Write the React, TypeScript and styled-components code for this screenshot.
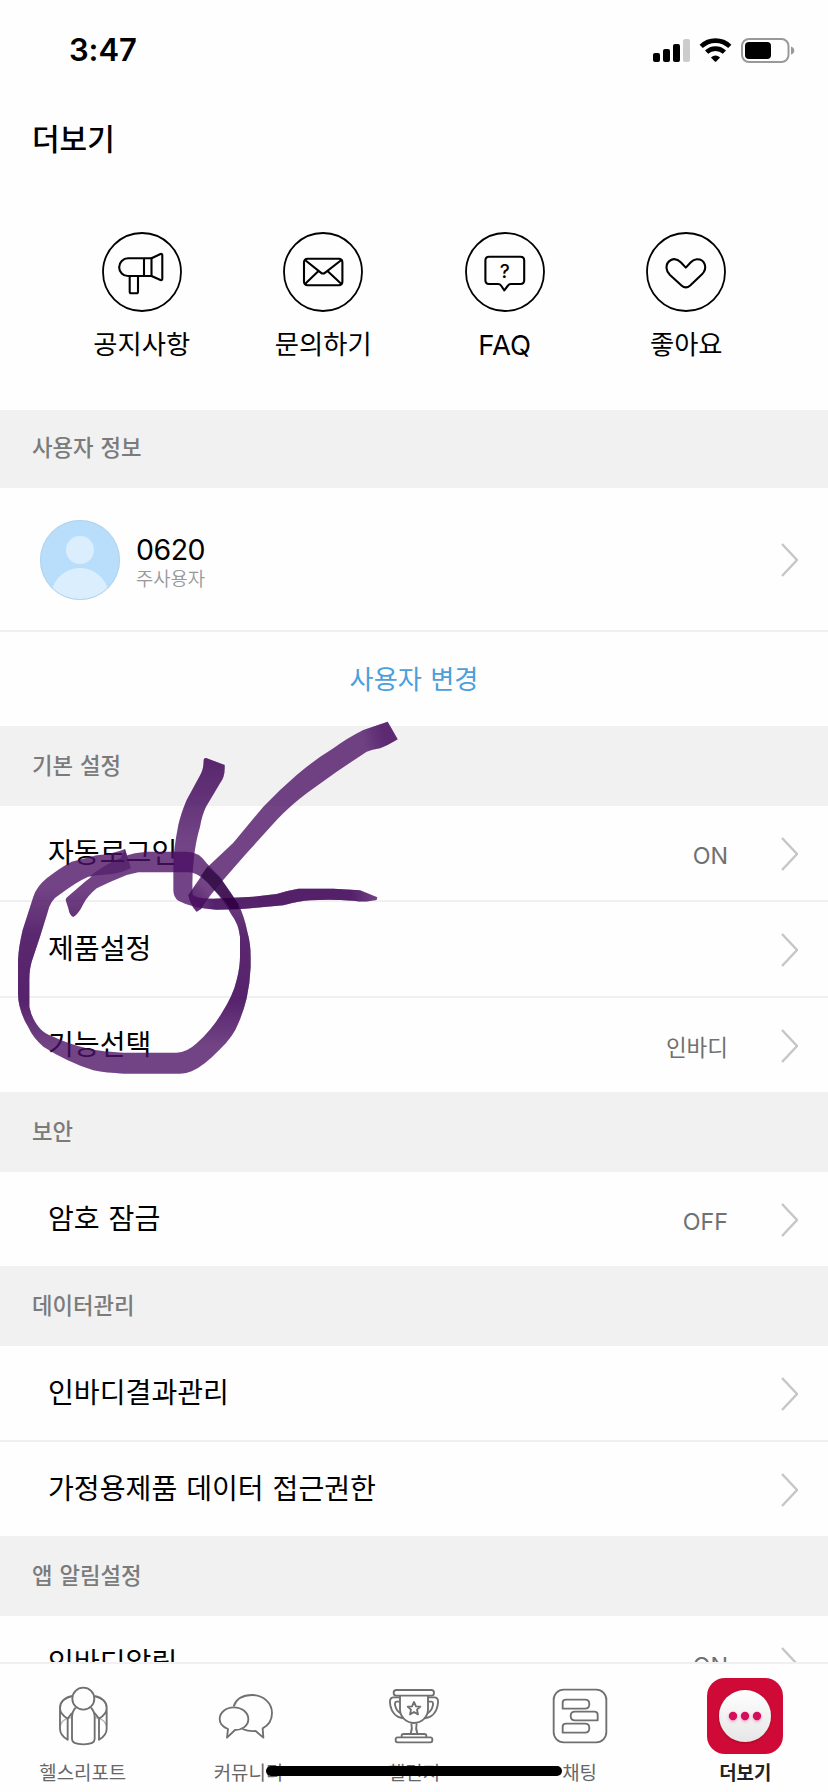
import React from "react";
import styled, { createGlobalStyle } from "styled-components";

const GlobalStyle = createGlobalStyle`
  * { box-sizing: border-box; }
  body {
    margin: 0;
    background: #fefefe;
    color: #000;
    font-family: Inter, "Noto Sans CJK KR", sans-serif;
    -webkit-font-smoothing: antialiased;
  }
`;

const Screen = styled.div`
  position: relative;
  display: flex;
  flex-direction: column;
  width: 828px;
  height: 1792px;
  overflow: hidden;
  background: #fefefe;
`;

const StatusBar = styled.header`
  display: flex;
  flex: none;
  justify-content: space-between;
  align-items: center;
  height: 99px;
  padding: 0 33px 0 69px;
`;

const Clock = styled.time`
  font-size: 31px;
  font-weight: 600;
  letter-spacing: -0.1px;
  line-height: 40px;
`;

const StatusIcons = styled.svg`
  width: 143px;
  height: 28px;
`;

const TitleBar = styled.div`
  display: flex;
  flex: none;
  align-items: center;
  height: 81px;
  padding: 0 32px 2px;
`;

const Title = styled.h1`
  margin: 0;
  font-size: 30px;
  font-weight: 500;
  line-height: 40px;
`;

const Content = styled.main`
  flex: 1;
  min-height: 0;
  overflow: hidden;
`;

const Shortcuts = styled.nav`
  display: grid;
  grid-template-columns: repeat(4, 1fr);
  height: 230px;
  padding: 52px 51px 0;
`;

const Shortcut = styled.div`
  display: flex;
  flex-direction: column;
  align-items: center;
  gap: 14px;
`;

const ShortcutIcon = styled.svg`
  width: 80px;
  height: 80px;
  fill: none;
  stroke: #000;
  stroke-width: 2.1;
  stroke-linejoin: round;
  stroke-linecap: round;
`;

const ShortcutLabel = styled.span<{ $latin?: boolean }>`
  font-size: ${(p) => (p.$latin ? 27.5 : 26.3)}px;
  line-height: 38px;
`;

const SectionHeader = styled.h2<{ $height?: number; $lift?: number }>`
  display: flex;
  align-items: center;
  height: ${(p) => p.$height ?? 80}px;
  margin: 0;
  padding: 0 32px ${(p) => p.$lift ?? 5}px;
  background: #f1f1f1;
  color: #7b7b7b;
  font-size: 22.3px;
  font-weight: 500;
  word-spacing: 1px;
`;

const Row = styled.div`
  display: flex;
  align-items: center;
  height: 94px;
  padding: 2px 30px 0 48px;
  & + & {
    height: 96px;
    border-top: 2px solid #f0f0f0;
  }
`;

const RowLabel = styled.span`
  flex: 1;
  padding-bottom: 7px;
  font-size: 28.1px;
  word-spacing: 1px;
`;

const RowValue = styled.span<{ $latin?: boolean }>`
  margin-right: 53px;
  padding-top: ${(p) => (p.$latin ? 2 : 0)}px;
  padding-bottom: ${(p) => (p.$latin ? 0 : 1)}px;
  color: #707070;
  font-size: ${(p) => (p.$latin ? 23.3 : 22.5)}px;
`;

const ChevronIcon = styled.svg`
  flex: none;
  width: 17px;
  height: 34px;
  fill: none;
  stroke: #c6c6c6;
  stroke-width: 2.4;
`;

const UserRow = styled.div`
  display: flex;
  align-items: center;
  height: 142px;
  padding: 2px 30px 0 40px;
`;

const Avatar = styled.svg`
  width: 80px;
  height: 80px;
`;

const UserText = styled.div`
  display: flex;
  flex: 1;
  flex-direction: column;
  padding: 6px 0 0 16px;
`;

const UserName = styled.span`
  font-size: 28.5px;
  line-height: 34px;
  letter-spacing: -0.5px;
`;

const UserRole = styled.span`
  color: #999;
  font-size: 18.8px;
  font-weight: 350;
  line-height: 26px;
`;

const ChangeUser = styled.div`
  display: flex;
  align-items: center;
  justify-content: center;
  height: 96px;
  padding-bottom: 3px;
  border-top: 2px solid #f0f0f0;
  color: #4c9fdb;
  font-size: 26.2px;
  word-spacing: 1px;
`;

const TabBar = styled.footer`
  display: grid;
  flex: none;
  grid-template-columns: repeat(5, 1fr);
  height: 130px;
  padding-top: 14px;
  border-top: 2px solid #f0f0f0;
  background: #fefefe;
`;

const Tab = styled.div`
  display: flex;
  flex-direction: column;
  align-items: center;
  gap: 7px;
`;

const TabIcon = styled.svg`
  width: 76px;
  height: 76px;
  fill: none;
  stroke: #707070;
  stroke-width: 5.6;
  stroke-linejoin: round;
`;

const TabLabel = styled.span<{ $active?: boolean }>`
  color: ${(p) => (p.$active ? "#222" : "#666")};
  font-size: 18.9px;
  font-weight: ${(p) => (p.$active ? 700 : 400)};
  line-height: 26px;
`;

const HomeIndicator = styled.div`
  position: absolute;
  left: 266px;
  bottom: 16px;
  width: 296px;
  height: 10px;
  border-radius: 5px;
  background: #000;
`;

const Markup = styled.svg`
  position: absolute;
  left: 0;
  top: 700px;
  width: 420px;
  height: 390px;
  pointer-events: none;
`;

const Chevron = () => (
  <ChevronIcon viewBox="0 0 17 34">
    <path d="M1 1 L16 17 L1 33" />
  </ChevronIcon>
);

const isLatin = (text: string) => /^[A-Z]+$/.test(text);

const SettingRow = ({ label, value }: { label: string; value?: string }) => (
  <Row>
    <RowLabel>{label}</RowLabel>
    {value && <RowValue $latin={isLatin(value)}>{value}</RowValue>}
    <Chevron />
  </Row>
);

const shortcuts = [
  {
    label: "공지사항",
    icon: (
      <>
        <path d="M49.5 26.3 H26 A8.8 8.8 0 0 0 26 44 H49.5 Z M42 26.3 V44" />
        <path d="M49.5 26.3 L58.5 22 Q60.3 21.4 60.3 23.2 V46.8 Q60.3 48.6 58.5 48 L49.5 44" />
        <path d="M27.7 44 V59.8 Q27.7 61.3 29.2 61.3 H34.5 Q36 61.3 36 59.8 V44" />
      </>
    ),
  },
  {
    label: "문의하기",
    icon: (
      <>
        <rect x="21" y="26.8" width="38.4" height="26.4" rx="3.4" />
        <path d="M22 28 L37.8 40.6 Q40 42.4 42.2 40.6 L58.4 28 M22 52 L35.5 39 M58.4 52 L44.5 39" />
      </>
    ),
  },
  {
    label: "FAQ",
    icon: (
      <>
        <path d="M24 24.8 H55.5 Q59.2 24.8 59.2 28.5 V48.3 Q59.2 52 55.5 52 H46 Q44 52 43 53.5 L39.3 58.4 L36 53.5 Q35 52 33 52 H24 Q20.4 52 20.4 48.3 V28.5 Q20.4 24.8 24 24.8 Z" />
        <text x="39.8" y="46" fontSize="19" fontWeight="500" textAnchor="middle" fill="#000" stroke="none">?</text>
      </>
    ),
  },
  {
    label: "좋아요",
    icon: (
      <path d="M39.8 35.6 L35 30.5 C28 23.5 20.3 29 20.5 36 C20.6 39 22 41 24 43 L35.5 53.5 Q39.8 57.4 44.2 53.5 L56 42.3 C62 36 59 27 50.8 27.2 C48 27.4 46.2 28.8 44.8 30.3 Z" />
    ),
  },
];

const ReportIcon = () => (
  <TabIcon viewBox="134 114 228 228">
    <g stroke="#b4b4b4" strokeWidth="4">
      <path d="M181 256 C183 244 192 238 203 235 L214 233" />
      <path d="M317 256 C315 244 306 238 295 235 L284 233" />
    </g>
    <circle cx="249" cy="176" r="33" />
    <path d="M226 203 C218 212 215 220 215 230 V297 C215 308 230 313 249 313 C268 313 283 308 283 297 V230 C283 220 280 212 272 203" />
    <path d="M216 168 C193 173 179 186 179 204 V266 C179 280 188 291 202 299 V236 C190 229 179 218 179 204 M202 236 L215 219" />
    <path d="M282 168 C305 173 319 186 319 204 V266 C319 280 310 291 296 299 V236 C308 229 319 218 319 204 M296 236 L283 219" />
  </TabIcon>
);

const CommunityIcon = () => (
  <TabIcon viewBox="631 114 228 228" strokeLinejoin="miter">
    <path d="M702 199 C710 176 732 165 757 165 C792 165 817 190 817 219 C817 239 806 256 789 265 L791 293 L768 273 Q748 275 728 267" />
    <path d="M702 202 C727 202 746 218 746 237 C746 258 727 270 706 270 L682 293 L685 267 C669 261 660 250 660 237 C660 218 679 202 702 202 Z" />
  </TabIcon>
);

const ChallengeIcon = () => (
  <TabIcon viewBox="1128 114 228 228">
    <rect x="1181" y="150" width="121" height="17" rx="8" />
    <path d="M1200 167 V208 C1200 232 1220 249 1242 249 C1264 249 1284 232 1284 208 V167" />
    <path d="M1200 172 H1180 C1170 172 1168 184 1171 196 C1175 218 1190 233 1211 235 M1200 185 H1190 C1184 185 1184 192 1186 199 C1189 210 1194 216 1202 220" />
    <path d="M1284 172 H1304 C1314 172 1316 184 1313 196 C1309 218 1294 233 1273 235 M1284 185 H1294 C1300 185 1300 192 1298 199 C1295 210 1290 216 1282 220" />
    <path d="M1242 186 L1248 199 L1261 200 L1251 209 L1254 223 L1242 216 L1230 223 L1233 209 L1223 200 L1236 199 Z" />
    <path d="M1234 250 Q1238 266 1232 281 M1250 250 Q1246 266 1252 281" />
    <path d="M1205 292 V287 Q1205 282 1211 282 H1273 Q1279 282 1279 287 V292" />
    <rect x="1187" y="292" width="110" height="15" rx="6" />
  </TabIcon>
);

const ChatIcon = () => (
  <TabIcon viewBox="425 114 228 228">
    <rect x="460" y="149" width="158" height="158" rx="30" />
    <path d="M487 206 V188 Q487 179 497 179 H554 Q567 179 567 192 Q567 206 554 206 Z" />
    <path d="M592 241 V224 Q592 215 582 215 H524 Q511 215 511 228 Q511 241 524 241 Z" />
    <path d="M487 278 V260 Q487 251 497 251 H554 Q567 251 567 264 Q567 278 554 278 Z" />
  </TabIcon>
);

const MoreIcon = () => (
  <TabIcon viewBox="0 0 228 228">
    <defs>
      <linearGradient id="disc" x1="0" y1="0" x2="0" y2="1">
        <stop offset="0" stopColor="#ffffff" />
        <stop offset="1" stopColor="#e6e6e6" />
      </linearGradient>
      <filter id="discShadow" x="-20%" y="-20%" width="140%" height="140%">
        <feDropShadow dx="0" dy="2" stdDeviation="2.5" floodColor="#700018" floodOpacity="0.6" />
      </filter>
      <filter id="dotShadow" x="-50%" y="-50%" width="200%" height="250%">
        <feDropShadow dx="0" dy="4" stdDeviation="4" floodColor="#e0105f" floodOpacity="0.35" />
      </filter>
    </defs>
    <rect width="228" height="228" rx="54" fill="#cf0a36" stroke="none" />
    <circle cx="114" cy="114" r="78" fill="url(#disc)" stroke="none" filter="url(#discShadow)" />
    <g fill="#d60b5c" stroke="none" filter="url(#dotShadow)">
      <circle cx="78" cy="114" r="12.5" />
      <circle cx="114" cy="114" r="12.5" />
      <circle cx="150" cy="114" r="12.5" />
    </g>
  </TabIcon>
);

const tabs = [
  { label: "헬스리포트", Icon: ReportIcon },
  { label: "커뮤니티", Icon: CommunityIcon },
  { label: "챌린지", Icon: ChallengeIcon },
  { label: "채팅", Icon: ChatIcon },
  { label: "더보기", Icon: MoreIcon, active: true },
];

const shaft =
  "M1163 65 L1090 90 Q1040 115 1000 145 Q940 182 890 225 Q840 268 790 320 L700 428 L622 502 L565 585 Q570 615 590 635 L604 626 Q625 590 665 545 L735 465 L830 360 Q870 318 920 280 L1010 215 L1100 155 Q1115 149 1140 145 Q1160 138 1193 118 Z";
const head =
  "M618 174 Q611 174 611 182 Q611 205 602 223 L560 300 Q543 340 535 375 Q520 450 520 500 V570 Q520 592 535 602 Q575 624 650 629 Q710 629 760 624 L850 616 Q900 603 930 601 Q990 597 1060 602 Q1090 606 1105 604 L1130 600 L1132 592 L1080 571 Q1040 568 1000 566 H895 Q860 572 830 582 L760 590 L640 596 Q590 596 578 585 Q575 530 582 470 Q588 420 600 380 Q606 345 618 320 L660 250 Q674 232 674 205 V195 Z";
const loop =
  "M197 600 Q197 594 203 590 L255 545 L330 487 Q370 468 405 460 L440 455 H560 Q598 455 620 490 L660 532 Q690 575 715 612 Q733 650 742 695 Q752 730 752 770 V800 Q750 850 740 895 Q732 930 715 970 Q700 1010 660 1048 Q610 1100 575 1114 Q560 1121 540 1121 H370 Q320 1119 280 1111 Q200 1085 130 1040 Q100 1015 85 982 Q54 930 54 880 V780 Q56 740 68 690 L100 590 Q110 560 140 535 Q180 503 215 485 L290 466 Q340 462 375 447 L393 505 Q360 520 330 523 L265 530 Q230 545 180 583 Q150 600 142 640 L120 710 L100 770 Q88 800 88 840 V920 Q96 960 122 988 Q135 1002 155 1008 Q200 1030 260 1045 Q310 1056 370 1058 H530 Q560 1058 590 1030 Q635 990 665 940 Q700 885 710 840 Q720 800 720 770 V710 Q715 670 695 645 Q670 600 640 568 Q600 520 570 517 H415 L380 525 Q330 545 290 565 Q262 588 250 612 Q235 643 220 651 Q209 648 205 625 Z";

const PenMarkup = () => (
  <Markup viewBox="0 0 1260 1170">
    <defs>
      <filter id="soften" x="-5%" y="-5%" width="110%" height="110%">
        <feGaussianBlur stdDeviation="2" />
      </filter>
      <linearGradient id="shaftEnd" gradientUnits="userSpaceOnUse" x1="1085" y1="120" x2="1150" y2="100">
        <stop offset="0" stopColor="#420a5a" stopOpacity="0" />
        <stop offset="1" stopColor="#420a5a" stopOpacity="0.45" />
      </linearGradient>
      <linearGradient id="shaftTip" gradientUnits="userSpaceOnUse" x1="625" y1="570" x2="590" y2="600">
        <stop offset="0" stopColor="#420a5a" stopOpacity="0" />
        <stop offset="1" stopColor="#420a5a" stopOpacity="0.4" />
      </linearGradient>
      <linearGradient id="headTop" gradientUnits="userSpaceOnUse" x1="0" y1="180" x2="0" y2="430">
        <stop offset="0" stopColor="#420a5a" stopOpacity="0.5" />
        <stop offset="0.4" stopColor="#420a5a" stopOpacity="0.32" />
        <stop offset="1" stopColor="#420a5a" stopOpacity="0" />
      </linearGradient>
      <linearGradient id="headTail" gradientUnits="userSpaceOnUse" x1="575" y1="0" x2="1135" y2="0">
        <stop offset="0" stopColor="#420a5a" stopOpacity="0" />
        <stop offset="0.12" stopColor="#420a5a" stopOpacity="0.6" />
        <stop offset="0.85" stopColor="#420a5a" stopOpacity="0.65" />
        <stop offset="1" stopColor="#420a5a" stopOpacity="0" />
      </linearGradient>
      <linearGradient id="loopSides" gradientUnits="userSpaceOnUse" x1="0" y1="560" x2="0" y2="1040">
        <stop offset="0" stopColor="#420a5a" stopOpacity="0" />
        <stop offset="0.3" stopColor="#420a5a" stopOpacity="0.5" />
        <stop offset="0.7" stopColor="#420a5a" stopOpacity="0.6" />
        <stop offset="1" stopColor="#420a5a" stopOpacity="0" />
      </linearGradient>
    </defs>
    <g filter="url(#soften)">
      <g fill="#4b0f64" fillOpacity="0.78">
        <path d={loop} />
        <path d={head} />
        <path d={shaft} />
      </g>
      <path d={loop} fill="url(#loopSides)" />
      <path d={head} fill="url(#headTop)" />
      <path d="M575 588 Q590 596 640 596 L760 590 L830 582 Q860 572 895 566 H1000 Q1040 568 1080 571 L1132 592 L1130 600 L1105 604 Q1090 606 1060 602 Q990 597 930 601 Q900 603 850 616 L760 624 Q710 629 650 629 Q600 627 560 613 Z" fill="url(#headTail)" />
      <path d={shaft} fill="url(#shaftEnd)" />
      <path d={shaft} fill="url(#shaftTip)" />
      <path d="M375 447 L393 505 Q360 520 330 523 L270 528 Q320 490 362 474 Z" fill="#420a5a" fillOpacity="0.5" />
      <path d="M622 500 L660 532 Q690 575 715 612 L718 628 L690 628 Q670 595 640 568 Q625 545 602 528 Z" fill="#1f0030" fillOpacity="0.5" />
    </g>
  </Markup>
);

export default function App() {
  return (
    <>
      <GlobalStyle />
      <Screen>
        <StatusBar>
          <Clock>3:47</Clock>
          <StatusIcons viewBox="652 35 143 28">
            <rect x="653" y="52" width="7" height="9" rx="2" />
            <rect x="663" y="48" width="7" height="13" rx="2" />
            <rect x="673" y="43" width="7" height="18" rx="2" />
            <rect x="683" y="38" width="7" height="23" rx="2" fill="#ccc" />
            <g fill="none" stroke="#000">
              <path d="M701.2 45.4 A20.6 20.6 0 0 1 729.8 45.4" strokeWidth="4.6" />
              <path d="M706.6 51.2 A12.8 12.8 0 0 1 724.4 51.2" strokeWidth="4.6" />
            </g>
            <path d="M710.9 56.4 Q715.5 52.6 720.1 56.4 L716.2 60.4 Q715.5 61 714.8 60.4 Z" />
            <rect x="742" y="38" width="46.5" height="23" rx="7" fill="none" stroke="#999" strokeWidth="2" />
            <rect x="745" y="41" width="26" height="17" rx="4" />
            <path d="M791 45.5 Q794.3 46.5 794.3 49.5 T791 53.5 Z" fill="#999" />
          </StatusIcons>
        </StatusBar>
        <TitleBar>
          <Title>더보기</Title>
        </TitleBar>
        <Content>
          <Shortcuts>
            {shortcuts.map(({ label, icon }) => (
              <Shortcut key={label}>
                <ShortcutIcon viewBox="0 0 80 80">
                  <circle cx="40" cy="40" r="39" strokeWidth="1.8" />
                  {icon}
                </ShortcutIcon>
                <ShortcutLabel $latin={isLatin(label)}>{label}</ShortcutLabel>
              </Shortcut>
            ))}
          </Shortcuts>
          <SectionHeader $height={78} $lift={7}>사용자 정보</SectionHeader>
          <UserRow>
            <Avatar viewBox="0 0 80 80">
              <defs>
                <clipPath id="face">
                  <circle cx="40" cy="40" r="40" />
                </clipPath>
              </defs>
              <g clipPath="url(#face)">
                <rect width="80" height="80" fill="#b9defb" />
                <circle cx="40" cy="30" r="14" fill="#dbeefd" />
                <circle cx="40" cy="77" r="29" fill="#dbeefd" />
              </g>
              <circle cx="40" cy="40" r="39.5" fill="none" stroke="#b4d3ea" />
            </Avatar>
            <UserText>
              <UserName>0620</UserName>
              <UserRole>주사용자</UserRole>
            </UserText>
            <Chevron />
          </UserRow>
          <ChangeUser>사용자 변경</ChangeUser>
          <SectionHeader>기본 설정</SectionHeader>
          <SettingRow label="자동로그인" value="ON" />
          <SettingRow label="제품설정" />
          <SettingRow label="기능선택" value="인바디" />
          <SectionHeader>보안</SectionHeader>
          <SettingRow label="암호 잠금" value="OFF" />
          <SectionHeader>데이터관리</SectionHeader>
          <SettingRow label="인바디결과관리" />
          <SettingRow label="가정용제품 데이터 접근권한" />
          <SectionHeader>앱 알림설정</SectionHeader>
          <SettingRow label="인바디알림" value="ON" />
        </Content>
        <TabBar>
          {tabs.map(({ label, Icon, active }) => (
            <Tab key={label}>
              <Icon />
              <TabLabel $active={active}>{label}</TabLabel>
            </Tab>
          ))}
        </TabBar>
        <PenMarkup />
        <HomeIndicator />
      </Screen>
    </>
  );
}
